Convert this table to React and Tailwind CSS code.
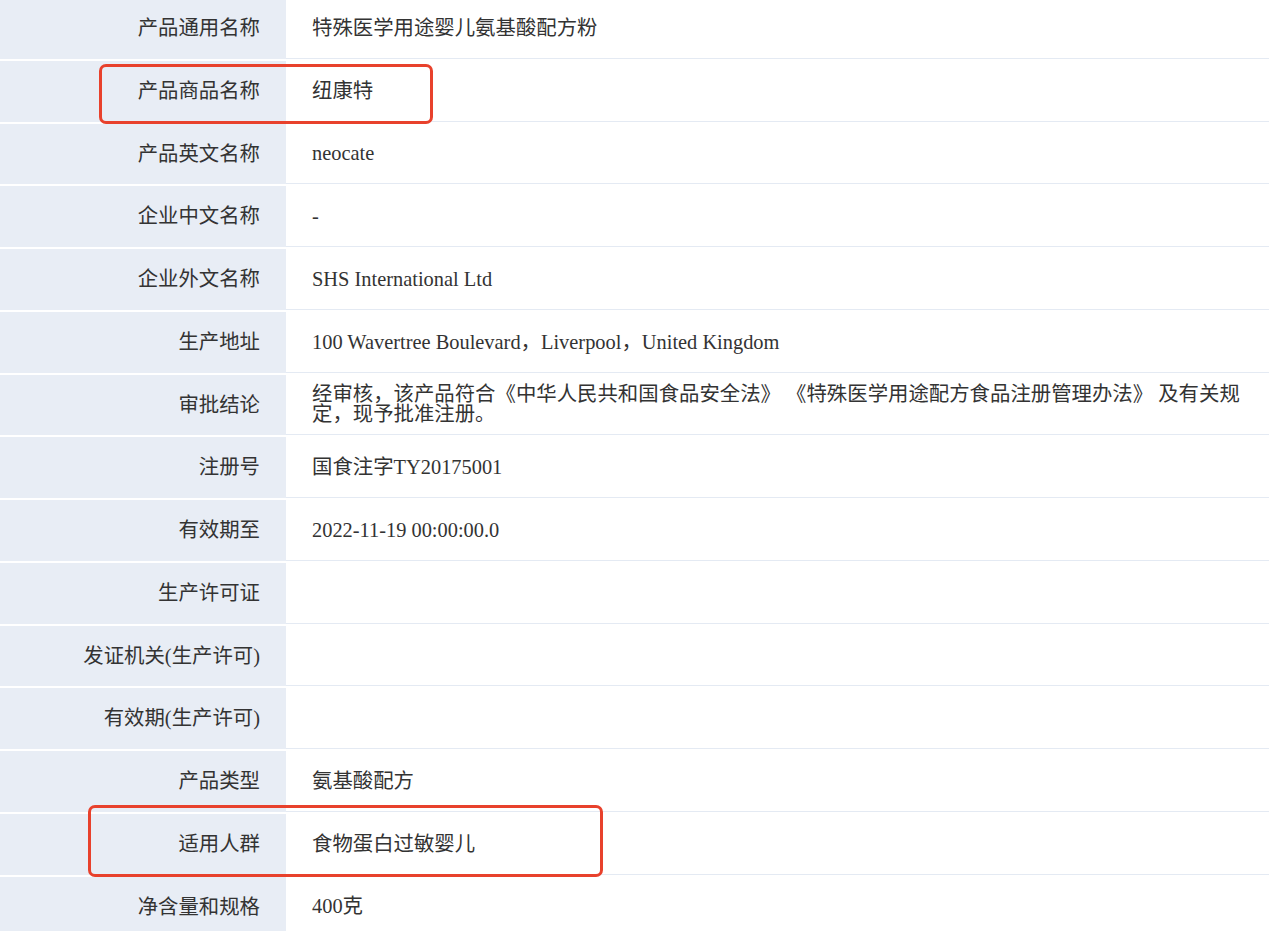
import React from "react";

const rows = [
  ["产品通用名称", "特殊医学用途婴儿氨基酸配方粉"],
  ["产品商品名称", "纽康特"],
  ["产品英文名称", "neocate"],
  ["企业中文名称", "-"],
  ["企业外文名称", "SHS International Ltd"],
  ["生产地址", "100 Wavertree Boulevard，Liverpool，United Kingdom"],
  ["审批结论", "经审核，该产品符合《中华人民共和国食品安全法》 《特殊医学用途配方食品注册管理办法》 及有关规定，现予批准注册。"],
  ["注册号", "国食注字TY20175001"],
  ["有效期至", "2022-11-19 00:00:00.0"],
  ["生产许可证", ""],
  ["发证机关(生产许可)", ""],
  ["有效期(生产许可)", ""],
  ["产品类型", "氨基酸配方"],
  ["适用人群", "食物蛋白过敏婴儿"],
  ["净含量和规格", "400克"],
];

export default function App() {
  return (
    <div
      className="relative w-[1269px] h-[931px] overflow-hidden bg-white text-[#333333] text-[20.4px]"
      style={{ fontFamily: '"Liberation Serif", "Noto Sans CJK SC", serif' }}
    >
      <div className="-mt-[2px] flex flex-col gap-[2px]">
        {rows.map(([label, value], i) => (
          <div key={i} className="flex h-[60.75px] shrink-0">
            <div className="w-[286px] shrink-0 bg-[#e8edf5] flex items-center justify-end pr-[26px] leading-none">
              {label}
            </div>
            <div className="flex-1 flex items-center pl-[26px] pr-[26px] border-b border-[#e4eaf3] leading-[20px]">
              <span>{value}</span>
            </div>
          </div>
        ))}
      </div>
      <div className="absolute left-[99px] top-[64px] w-[334px] h-[60px] border-[3px] border-[#e8412c] rounded-[7px]" />
      <div className="absolute left-[88px] top-[805px] w-[515px] h-[72px] border-[3px] border-[#e8412c] rounded-[7px]" />
    </div>
  );
}
